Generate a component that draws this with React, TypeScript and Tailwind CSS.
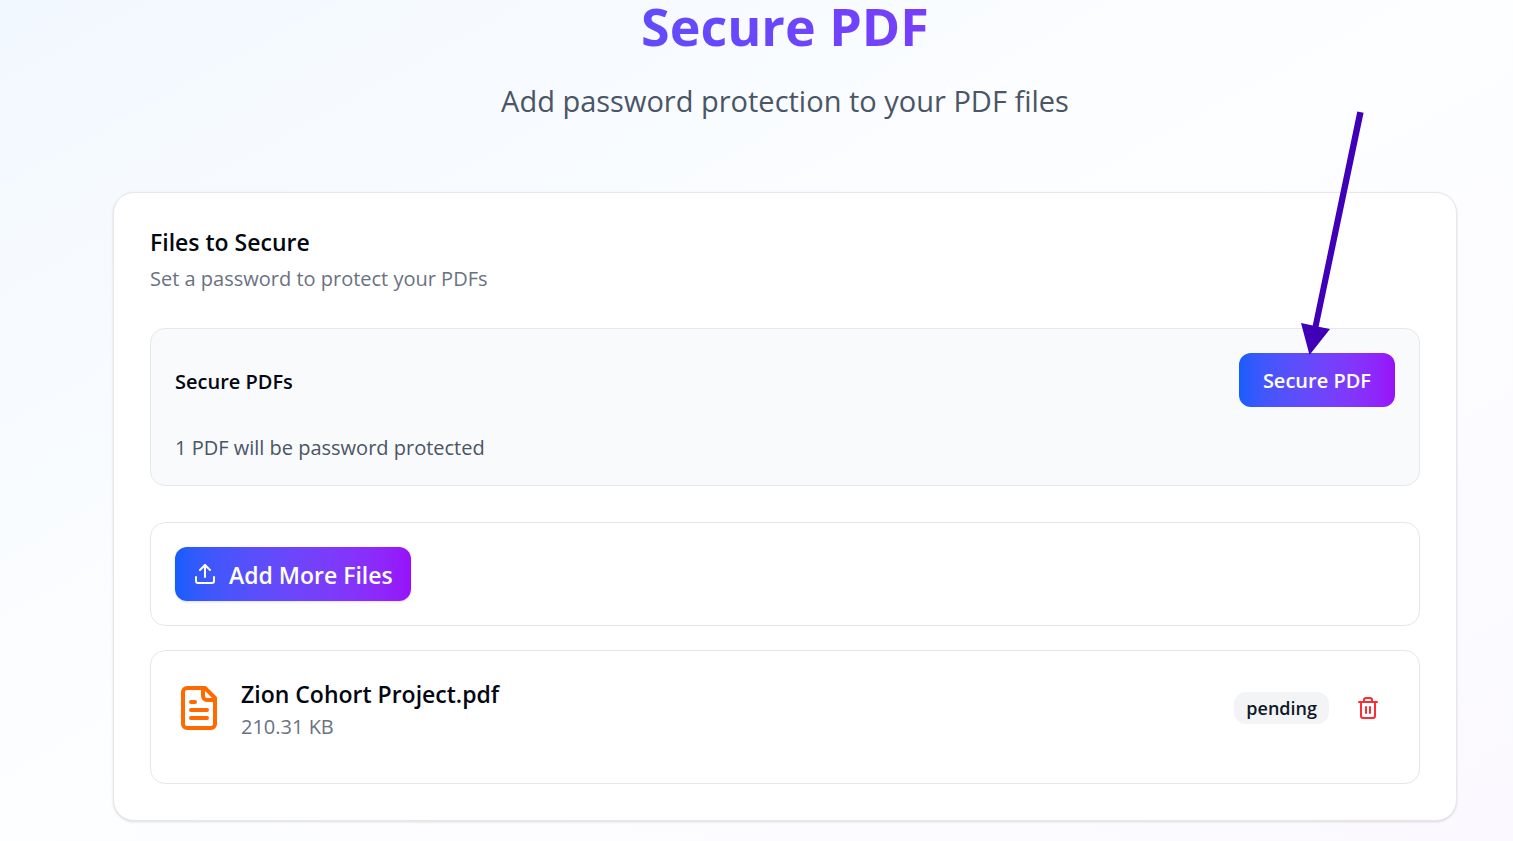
import React, { FC } from 'react'
import { Trash2, Upload } from 'lucide-react'

interface PdfFileProps {
  id: string
  name: string
  size: string
  status: string
}

const files: PdfFileProps[] = [
  { id: '1', name: 'Zion Cohort Project.pdf', size: '210.31 KB', status: 'pending' },
]

const FileIcon: FC = () => (
  <svg
    className="size-12 text-[#ff6900]"
    viewBox="0 0 24 24"
    fill="none"
    stroke="currentColor"
    strokeWidth="2"
    strokeLinecap="round"
    strokeLinejoin="round"
    aria-hidden="true"
  >
    <path d="M15 2H6a2 2 0 0 0-2 2v16a2 2 0 0 0 2 2h12a2 2 0 0 0 2-2V7Z" />
    <path d="M14 2v4a2 2 0 0 0 2 2h4" />
    <path d="M10 9H8M16 13H8M16 17H8" />
  </svg>
)

const FileRow: FC<{ file: PdfFileProps }> = ({ file }) => {
  return (
    <li className="flex items-center justify-between">
      <div className="flex items-center gap-[18px]">
        <FileIcon />
        <div className="pt-0.5">
          <p className="text-[23px] leading-9 font-semibold text-gray-950">
            {file.name}
          </p>
          <p className="text-xl leading-[30px] text-gray-500">{file.size}</p>
        </div>
      </div>
      <div className="flex items-center gap-3">
        <span className="rounded-xl bg-gray-100 px-3 text-lg leading-8 font-semibold text-gray-900">
          {file.status}
        </span>
        <button
          type="button"
          aria-label="Remove file"
          className="flex h-12 w-[54px] items-center justify-center text-[#fb2c36]"
        >
          <Trash2 size={24} />
        </button>
      </div>
    </li>
  )
}

// arrow that points at the secure button
const Pointer: FC = () => (
  <svg
    className="pointer-events-none absolute -top-[242px] right-7 h-[246px] w-[68px]"
    viewBox="0 0 68 246"
    fill="#3f00b8"
    aria-hidden="true"
  >
    <path d="M58.3 0.5 64.6 1.7 19.6 215.8 31 218 10.5 244 2 212 13.7 214.4Z" />
  </svg>
)

const App: FC = () => {
  return (
    <div className="min-h-screen bg-linear-to-br from-[#f2f8ff] via-[#fdfeff] to-[#fbf9ff] pr-14 pb-5 pl-[113px] font-['Open_Sans','Noto_Sans',sans-serif]">
      <header className="pb-[69px] text-center">
        <h1 className="bg-linear-to-r from-[#155dfc] to-[#9810fa] bg-clip-text text-[52px] leading-[52px] font-bold text-transparent">
          Secure PDF
        </h1>
        <p className="pt-[26px] text-[29px] leading-[45px] text-gray-600">
          Add password protection to your PDF files
        </p>
      </header>

      <main className="rounded-[21px] border border-gray-200 bg-white p-9 shadow-sm">
        <h2 className="text-[23px] leading-[26px] font-semibold text-gray-950">
          Files to Secure
        </h2>
        <p className="pt-[9px] text-xl leading-[30px] text-gray-500">
          Set a password to protect your PDFs
        </p>

        <section className="mt-[34px] rounded-[15px] border border-gray-200 bg-gray-50 px-6 pt-6 pb-[22px]">
          <div className="flex items-center justify-between">
            <h3 className="pt-[3px] text-xl font-semibold text-gray-950">
              Secure PDFs
            </h3>
            <div className="relative">
              <button
                type="button"
                className="h-[54px] rounded-xl bg-linear-to-r from-[#155dfc] to-[#9810fa] px-6 pt-0.5 text-xl font-semibold text-white"
              >
                Secure PDF
              </button>
              <Pointer />
            </div>
          </div>
          <p className="mt-[26px] text-xl leading-[30px] text-gray-600">
            1 PDF will be password protected
          </p>
        </section>

        <section className="mt-9 rounded-[15px] border border-gray-200 p-6">
          <button
            type="button"
            className="flex h-[54px] items-center gap-3 rounded-xl bg-linear-to-r from-[#155dfc] to-[#9810fa] px-[18px] text-[23px] font-semibold text-white shadow-sm"
          >
            <Upload size={24} />
            <span className="pt-0.5">Add More Files</span>
          </button>
        </section>

        <ul className="mt-6 rounded-[15px] border border-gray-200 px-6 pt-[23px] pb-[41px]">
          {files.map((file) => (
            <FileRow key={file.id} file={file} />
          ))}
        </ul>
      </main>
    </div>
  )
}

export default App
